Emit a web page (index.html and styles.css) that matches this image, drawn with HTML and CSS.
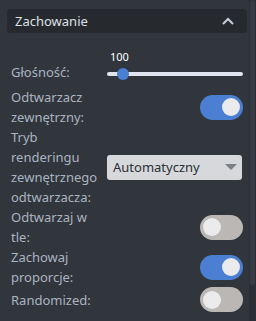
FILE: index.html
```html
<!DOCTYPE html>
<html lang="pl">
<head>
  <meta charset="UTF-8" />
  <meta name="viewport" content="width=device-width, initial-scale=1.0"/>
  <title>Zachowanie</title>
  <link rel="stylesheet" href="styles.css">
</head>
<body>
  <div class="layout">
    <div class="panel">
      <div class="section-head">
        <span>Zachowanie</span>
        <svg class="chevron" width="12" height="8" viewBox="0 0 12 8">
          <path d="M1 7 L6 2 L11 7" fill="none" stroke="#c9ced6" stroke-width="2"/>
        </svg>
      </div>

      <div class="form">
        <div class="row row-volume">
          <label class="label">Głośność:</label>
          <div class="slider">
            <div class="slider-value">100</div>
            <div class="slider-track">
              <div class="slider-thumb"></div>
            </div>
          </div>
        </div>

        <div class="row">
          <label class="label">Odtwarzacz zewnętrzny:</label>
          <div class="toggle on"><span class="knob"></span></div>
        </div>

        <div class="row">
          <label class="label">Tryb renderingu zewnętrznego odtwarzacza:</label>
          <div class="select">
            <span>Automatyczny</span>
            <span class="caret"></span>
          </div>
        </div>

        <div class="row">
          <label class="label">Odtwarzaj w tle:</label>
          <div class="toggle"><span class="knob"></span></div>
        </div>

        <div class="row">
          <label class="label">Zachowaj proporcje:</label>
          <div class="toggle on"><span class="knob"></span></div>
        </div>

        <div class="row">
          <label class="label">Randomized:</label>
          <div class="toggle"><span class="knob"></span></div>
        </div>
      </div>
    </div>

    <div class="scrollbar">
      <div class="scrollbar-thumb"></div>
    </div>
  </div>
</body>
</html>
```

FILE: styles.css
```css
body {
  margin: 0;
  background: #31353c;
  font-family: "Noto Sans", sans-serif;
  font-size: 13px;
  color: #aab4c0;
}
.layout {
  display: flex;
  height: 321px;
  overflow: hidden;
}
.panel {
  width: 249px;
}
.section-head {
  display: flex;
  align-items: center;
  justify-content: space-between;
  height: 24px;
  margin: 9px 2px 0 7px;
  padding: 0 13px 0 8px;
  background: #26292e;
  border-radius: 4px;
  color: #dde0e5;
  font-size: 13px;
}
.form {
  margin-top: 18px;
  padding: 0 6px 0 11px;
}
.row {
  display: grid;
  grid-template-columns: 96px 1fr;
  align-items: center;
  min-height: 25px;
}
.label {
  padding-right: 6px;
  line-height: 20px;
}
.row-volume {
  align-items: end;
}
.row-volume .label {
  padding-bottom: 5px;
}
.slider {
  display: flex;
  flex-direction: column;
}
.slider-value {
  margin-left: 3px;
  font-size: 11px;
  line-height: 12px;
  color: #ffffff;
}
.slider-track {
  position: relative;
  height: 4px;
  margin: 9px 0 11px;
  background: #dfe4ee;
  border-radius: 2px;
}
.slider-thumb {
  position: absolute;
  left: 10px;
  top: -4px;
  width: 12px;
  height: 12px;
  border-radius: 50%;
  background: #4a7fd2;
}
.toggle {
  justify-self: end;
  display: flex;
  align-items: center;
  width: 43px;
  height: 25px;
  padding: 0 3px;
  box-sizing: border-box;
  border-radius: 13px;
  background: #bab7b5;
}
.toggle.on {
  justify-content: flex-end;
  background: #4a7fd2;
}
.knob {
  width: 18px;
  height: 18px;
  border-radius: 50%;
  background: #ebebed;
}
.select {
  display: flex;
  align-items: center;
  justify-content: space-between;
  height: 25px;
  margin-right: 1px;
  padding: 0 5px 0 6px;
  background: #d6d8db;
  border-radius: 3px;
  color: #2b2f36;
}
.caret {
  width: 0;
  height: 0;
  border-left: 6px solid transparent;
  border-right: 6px solid transparent;
  border-top: 6px solid #7b8087;
}
.scrollbar {
  width: 7px;
  background: #2b2e34;
}
.scrollbar-thumb {
  width: 5px;
  height: 285px;
  margin-left: 1px;
  border-radius: 3px;
  background: #383c44;
}
```
